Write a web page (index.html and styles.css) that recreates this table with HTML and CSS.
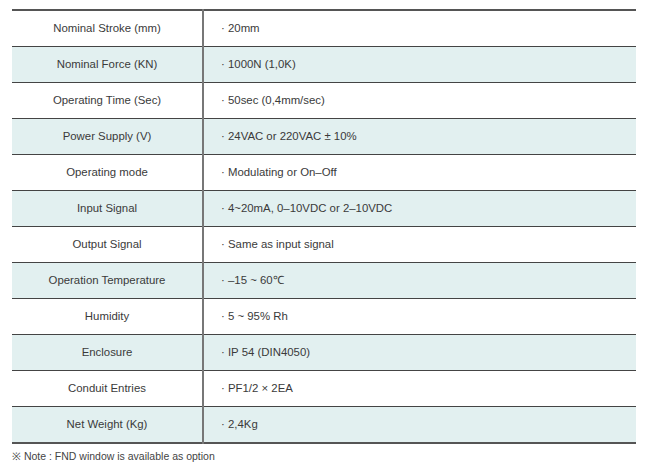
FILE: index.html
```html
<!DOCTYPE html>
<html>
<head>
<meta charset="utf-8">
<link rel="stylesheet" href="styles.css">
</head>
<body>
<div class="wrap">
<table class="spec">
<tr><td class="k">Nominal Stroke (mm)</td><td class="v">· 20mm</td></tr>
<tr class="alt"><td class="k">Nominal Force (KN)</td><td class="v">· 1000N (1,0K)</td></tr>
<tr><td class="k">Operating Time (Sec)</td><td class="v">· 50sec (0,4mm/sec)</td></tr>
<tr class="alt"><td class="k">Power Supply (V)</td><td class="v">· 24VAC or 220VAC ± 10%</td></tr>
<tr><td class="k">Operating mode</td><td class="v">· Modulating or On–Off</td></tr>
<tr class="alt"><td class="k">Input Signal</td><td class="v">· 4~20mA, 0–10VDC or 2–10VDC</td></tr>
<tr><td class="k">Output Signal</td><td class="v">· Same as input signal</td></tr>
<tr class="alt"><td class="k">Operation Temperature</td><td class="v">· –15 ~ 60℃</td></tr>
<tr><td class="k">Humidity</td><td class="v">· 5 ~ 95% Rh</td></tr>
<tr class="alt"><td class="k">Enclosure</td><td class="v">· IP 54 (DIN4050)</td></tr>
<tr><td class="k">Conduit Entries</td><td class="v">· PF1/2 × 2EA</td></tr>
<tr class="alt"><td class="k">Net Weight (Kg)</td><td class="v">· 2,4Kg</td></tr>
</table>
<p class="note">※ Note : FND window is available as option</p>
</div>
</body>
</html>
```
FILE: styles.css
```css
html, body { margin: 0; padding: 0; background: #fff; }
body {
  font-family: "Liberation Sans", Arial, sans-serif;
  color: #3a3a3a;
}
.wrap { padding: 9px 9px 0 12px; }
.spec {
  width: 624px;
  border-collapse: collapse;
  border-top: 2px solid #555;
  border-bottom: 2px solid #555;
  font-size: 11.4px;
}
.spec td {
  height: 35px;
  padding: 0;
  border-top: 1px solid #444;
  line-height: 1;
}
.spec tr:first-child td { border-top: none; }
.spec .k {
  width: 190px;
  text-align: center;
  border-right: 2px solid #777;
}
.spec .v {
  padding-left: 17px;
}
.spec tr.alt td { background: #e2f0f0; }
.note {
  margin: 6px 0 0 0;
  font-size: 10.5px;
  line-height: 12px;
  color: #444;
}
```
